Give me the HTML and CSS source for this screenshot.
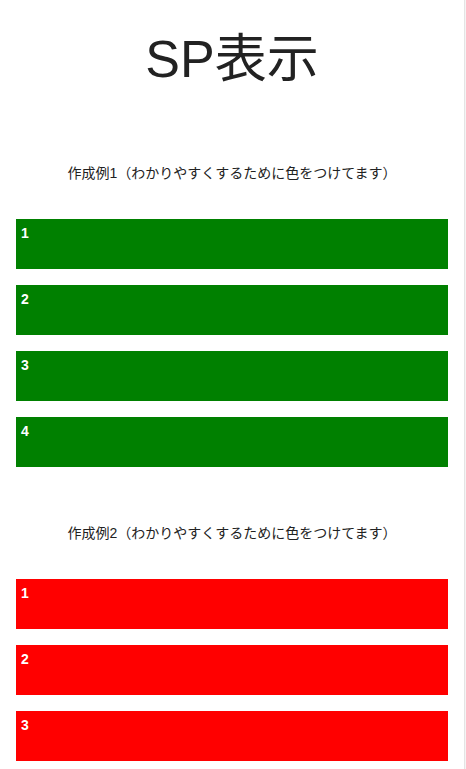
FILE: index.html
```html
<!DOCTYPE html>
<html lang="ja">
<head>
    <meta charset="UTF-8">
    <meta name="viewport" content="width=device-width, initial-scale=1.0">
    <title>SP表示</title>
    <link rel="stylesheet" href="styles.css">
</head>
<body>
    <div class="page">
        <h1 class="page-title">SP表示</h1>

        <section class="sample">
            <p class="sample-caption">作成例1（わかりやすくするために色をつけてます）</p>
            <div class="box-list">
                <div class="box box-green">1</div>
                <div class="box box-green">2</div>
                <div class="box box-green">3</div>
                <div class="box box-green">4</div>
            </div>
        </section>

        <section class="sample">
            <p class="sample-caption">作成例2（わかりやすくするために色をつけてます）</p>
            <div class="box-list">
                <div class="box box-red">1</div>
                <div class="box box-red">2</div>
                <div class="box box-red">3</div>
                <div class="box box-red">4</div>
            </div>
        </section>
    </div>
</body>
</html>
```

FILE: styles.css
```css
html, body {
    margin: 0;
    padding: 0;
    background: #fff;
}

body {
    font-family: "Liberation Sans", Arial, "Noto Sans CJK JP", sans-serif;
    color: #222;
}

.page {
    width: 464px;
    min-height: 100vh;
    border-right: 1px solid #e4e4e4;
    box-shadow: 1px 0 0 #f4f4f4;
}

.page-title {
    margin: 0;
    padding-top: 29px;
    font-size: 52px;
    line-height: 60px;
    font-weight: normal;
    text-align: center;
    color: #222;
}

.sample {
    padding: 0 16px;
}

.sample-caption {
    margin: 0;
    padding-top: 74px;
    font-size: 14px;
    line-height: 20px;
    text-align: center;
    color: #222;
}

.sample + .sample .sample-caption {
    padding-top: 56px;
}

.box-list {
    display: flex;
    flex-direction: column;
    gap: 16px;
    margin-top: 36px;
}

.box {
    height: 50px;
    box-sizing: border-box;
    padding: 4px 5px;
    font-size: 14px;
    line-height: 20px;
    font-weight: bold;
    color: #fff;
}

.box-green {
    background-color: #008000;
}

.box-red {
    background-color: #ff0000;
}
```
